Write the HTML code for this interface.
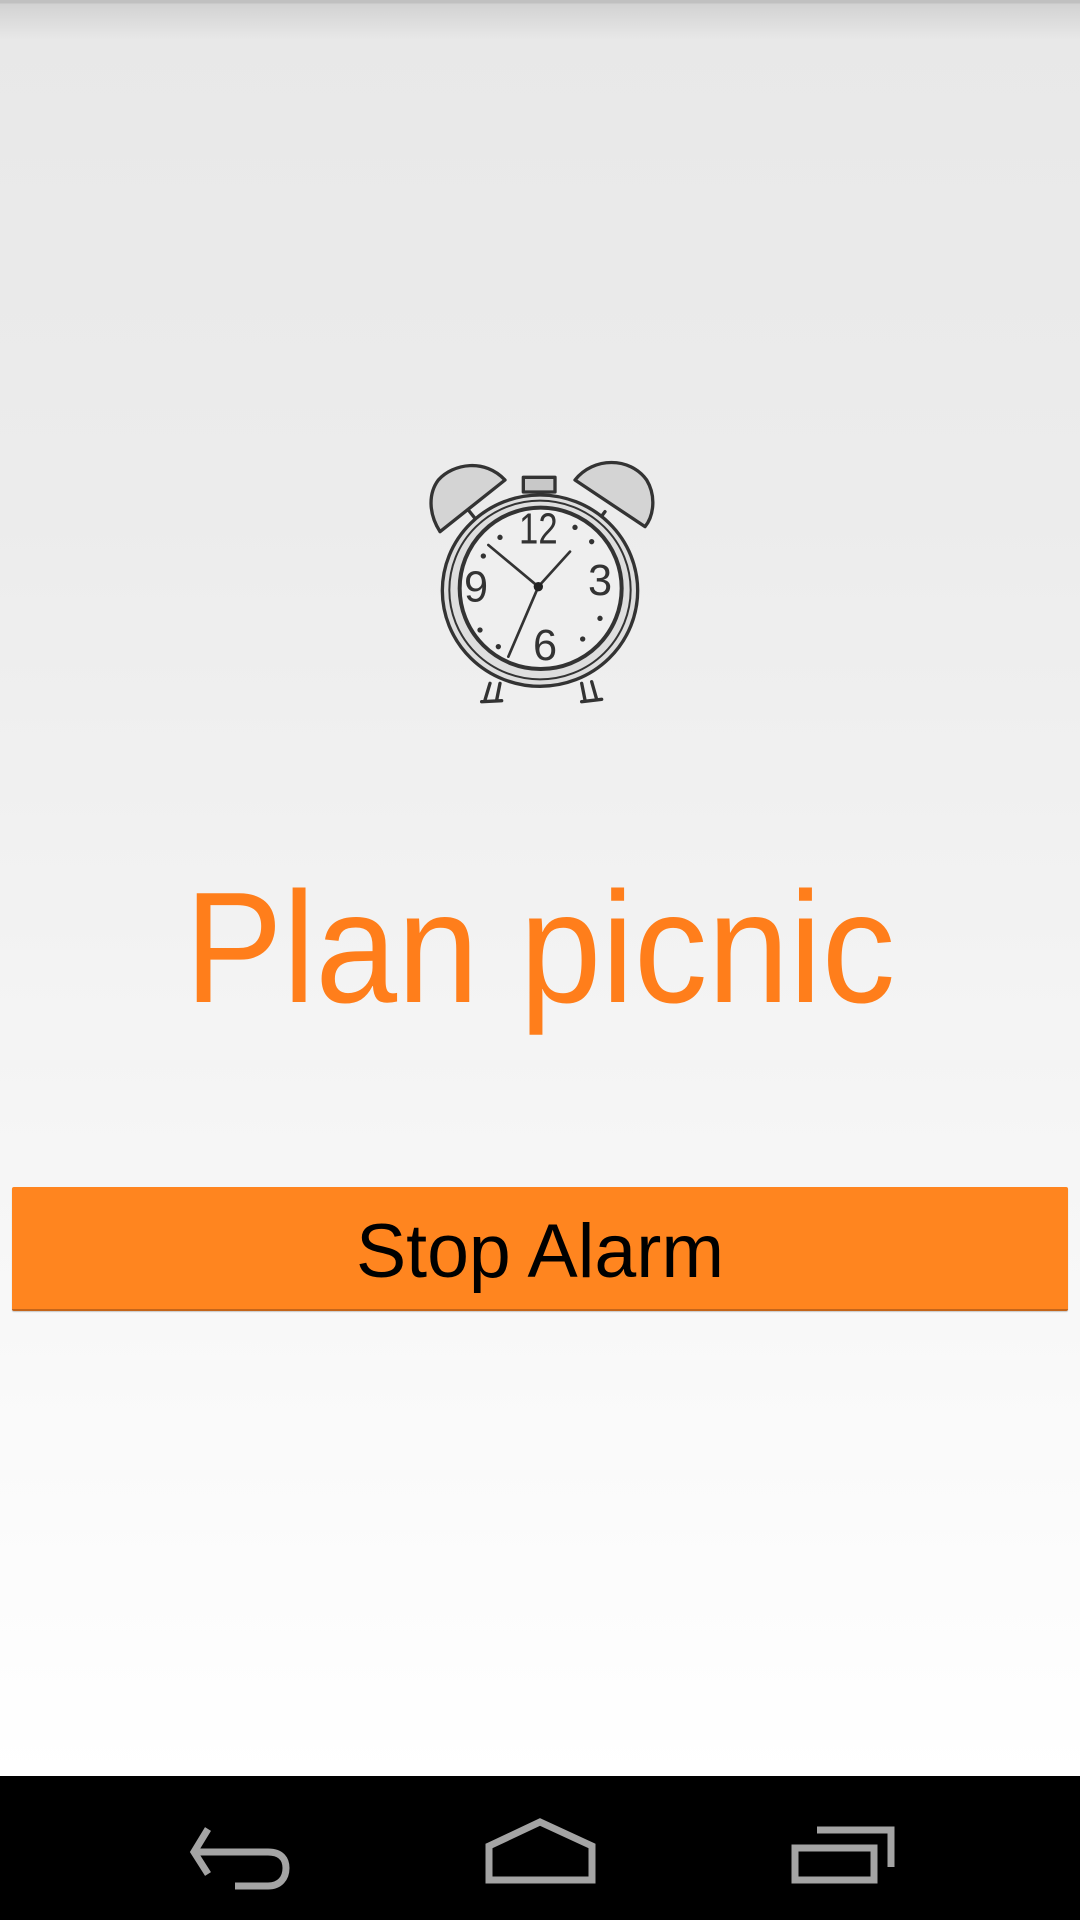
<!DOCTYPE html>
<html><head><style>
html,body{margin:0;padding:0}
body{width:1080px;height:1920px;position:relative;overflow:hidden;font-family:"Liberation Sans",sans-serif;
background:linear-gradient(#e8e8e8 0px,#ececec 500px,#f5f5f5 1100px,#fdfdfd 1650px,#fff 1776px);}
.top{position:absolute;left:0;top:0;width:1080px;height:40px;background:linear-gradient(#c0c0c0 0,#c0c0c0 3px,#d2d2d2 4px,#e8e8e8 40px)}
.title{position:absolute;left:0;width:1080px;top:858px;text-align:center;color:#ff7e1b;font-size:158px;line-height:180px;transform:scaleX(0.93);transform-origin:540px 0;font-weight:300}
.btn{position:absolute;left:12px;top:1187px;width:1056px;height:122px;background:#ff851f;border-bottom:2px solid #c4651a;border-radius:2px;box-shadow:0 1px 1px rgba(0,0,0,.2)}
.btn span{position:absolute;left:0;width:1056px;top:4px;line-height:122px;text-align:center;font-size:76px;color:#000;transform:scaleX(0.99);transform-origin:528px 0}
.nav{position:absolute;left:0;top:1776px;width:1080px;height:144px;background:#000}
</style></head><body>
<div class="top"></div>
<svg style="position:absolute;left:400px;top:430px" width="280" height="290" viewBox="0 0 840 870">
<g fill="none" stroke="#333" stroke-width="10" stroke-linecap="round" stroke-linejoin="round">
<path d="M120,305 C85,250 85,190 115,150 C160,100 255,85 315,150 Z" fill="#d4d4d4"/>
<path d="M525,150 C580,80 690,80 740,150 C770,200 760,260 735,290 Z" fill="#d4d4d4"/>
<path d="M205,240 L225,265 M615,245 L600,265"/>
<rect x="370" y="142" width="95" height="44" fill="#c8c8c8"/>
<ellipse cx="420" cy="482" rx="293" ry="287" fill="#dedede"/>
<ellipse cx="420" cy="480" rx="272" ry="268" stroke-width="6"/>
<ellipse cx="422" cy="475" rx="243" ry="242" fill="#efefef" stroke-width="12"/>
<path d="M270,760 L255,810 M300,760 L290,810 M245,815 L305,812"/>
<path d="M545,760 L555,810 M575,755 L590,808 M545,815 L605,808"/>
<path d="M265,345 L415,470 L510,365 M415,470 L325,680" stroke-width="8"/>
</g>
<circle cx="415" cy="470" r="14" fill="#222"/>
<g fill="#333"><circle cx="300" cy="322" r="8"/><circle cx="250" cy="378" r="8"/><circle cx="525" cy="292" r="8"/><circle cx="575" cy="335" r="8"/><circle cx="240" cy="600" r="8"/><circle cx="295" cy="650" r="8"/><circle cx="600" cy="565" r="8"/><circle cx="548" cy="627" r="8"/></g>
<g font-family="Liberation Sans,sans-serif" font-size="130" fill="#333" text-anchor="middle">
<text x="415" y="340" transform="translate(415 0) scale(0.8 1) translate(-415 0)">12</text><text x="600" y="495">3</text><text x="228" y="515">9</text><text x="435" y="690">6</text></g>
</svg>
<div class="title">Plan picnic</div>
<div class="btn"><span>Stop Alarm</span></div>
<div class="nav">
<svg width="1080" height="144" style="position:absolute;left:0;top:0" fill="none" stroke="#a4a4a4" stroke-width="7">
<path d="M208,53 L194,76 L208,98 M194,76 L268,76 C282,76 286,84 286,92 C286,102 280,110 268,110 L235,110"/>
<path d="M489,70 L540,46 L592,70 L592,104 L489,104 Z"/>
<rect x="795" y="72" width="79" height="32"/>
<path d="M817,54 L891,54 L891,91"/>
</svg>
</div>
</body></html>
